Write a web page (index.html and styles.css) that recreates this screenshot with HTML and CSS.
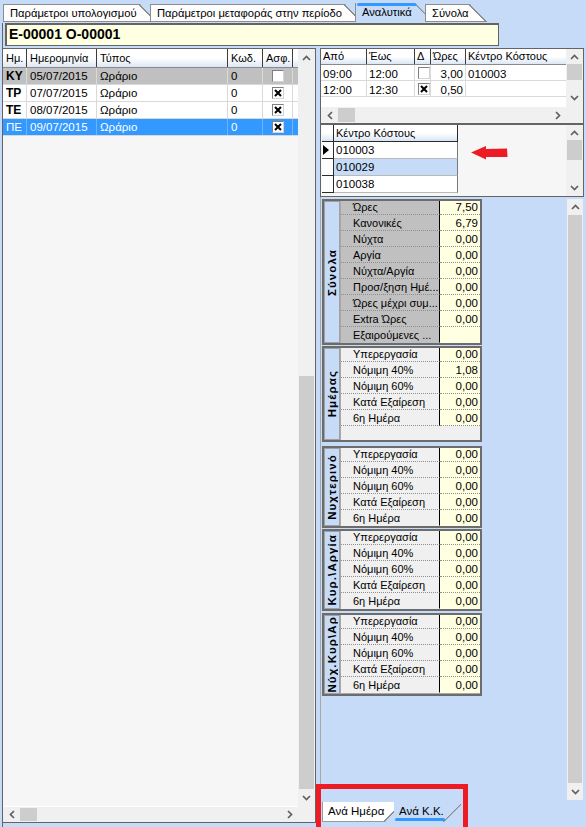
FILE: index.html
```html
<!DOCTYPE html>
<html lang="el">
<head>
<meta charset="utf-8">
<title>Αναλυτικά</title>
<link rel="stylesheet" href="styles.css">
</head>
<body>
<div class="tabs">
  <div class="tab t1">Παράμετροι υπολογισμού</div>
  <div class="tab t2">Παράμετροι μεταφοράς στην περίοδο</div>
  <div class="tab t3 active">Αναλυτικά</div>
  <div class="tab t4">Σύνολα</div>
</div>
<div class="page">
  <div class="title">E-00001 O-00001</div>
  <div class="content">
    <div class="lpane">
      <div class="lbody">
        <div class="lrow lhead">
          <div class="c w1">Ημ.</div><div class="c w2">Ημερομηνία</div><div class="c w3">Τύπος</div><div class="c w4">Κωδ.</div><div class="c w5">Ασφ.</div><div class="c w6"></div>
        </div>
        <div class="lrow gray">
          <div class="c w1 b">ΚΥ</div><div class="c w2">05/07/2015</div><div class="c w3">Ωράριο</div><div class="c w4">0</div><div class="c w5 cbc"><span class="chk"></span></div><div class="c w6"></div>
        </div>
        <div class="lrow">
          <div class="c w1 b">ΤΡ</div><div class="c w2">07/07/2015</div><div class="c w3">Ωράριο</div><div class="c w4">0</div><div class="c w5 cbc"><span class="chk"><svg width="8" height="8" viewBox="0 0 8 8"><path d="M1 1L7 7M7 1L1 7" stroke="#000" stroke-width="2"/></svg></span></div><div class="c w6"></div>
        </div>
        <div class="lrow">
          <div class="c w1 b">ΤΕ</div><div class="c w2">08/07/2015</div><div class="c w3">Ωράριο</div><div class="c w4">0</div><div class="c w5 cbc"><span class="chk"><svg width="8" height="8" viewBox="0 0 8 8"><path d="M1 1L7 7M7 1L1 7" stroke="#000" stroke-width="2"/></svg></span></div><div class="c w6"></div>
        </div>
        <div class="lrow sel">
          <div class="c w1">ΠΕ</div><div class="c w2">09/07/2015</div><div class="c w3">Ωράριο</div><div class="c w4">0</div><div class="c w5 cbc"><span class="chk"><svg width="8" height="8" viewBox="0 0 8 8"><path d="M1 1L7 7M7 1L1 7" stroke="#000" stroke-width="2"/></svg></span></div><div class="c w6"></div>
        </div>
      </div>
      <div class="vsb lv">
        <div class="btn vb"><svg width="9" height="6" viewBox="0 0 9 6"><path d="M1 5L4.5 1.5L8 5" fill="none" stroke="#5f5f5f" stroke-width="1.7"/></svg></div>
        <div class="pre"></div>
        <div class="thumb"></div>
        <div class="btn vb"><svg width="9" height="6" viewBox="0 0 9 6"><path d="M1 1L4.5 4.5L8 1" fill="none" stroke="#5f5f5f" stroke-width="1.7"/></svg></div>
      </div>
      <div class="hsb">
        <div class="btn hb"><svg width="6" height="9" viewBox="0 0 6 9"><path d="M5 1L1.5 4.5L5 8" fill="none" stroke="#5f5f5f" stroke-width="1.7"/></svg></div>
        <div class="hthumb"></div>
        <div class="htrack"></div>
        <div class="btn hb"><svg width="6" height="9" viewBox="0 0 6 9"><path d="M1 1L4.5 4.5L1 8" fill="none" stroke="#5f5f5f" stroke-width="1.7"/></svg></div>
      </div>
      <div class="corner"></div>
    </div>

    <div class="rpane">
      <div class="tgrid">
        <div class="tbody">
          <div class="trow thead">
            <div class="tc a1">Από</div><div class="tc a2">Έως</div><div class="tc a3">Δ</div><div class="tc a4">Ώρες</div><div class="tc a5">Κέντρο Κόστους</div>
          </div>
          <div class="trow">
            <div class="tc a1">09:00</div><div class="tc a2">12:00</div><div class="tc a3 cbc"><span class="chk"></span></div><div class="tc a4 num">3,00</div><div class="tc a5">010003</div>
          </div>
          <div class="trow">
            <div class="tc a1">12:00</div><div class="tc a2">12:30</div><div class="tc a3 cbc"><span class="chk"><svg width="8" height="8" viewBox="0 0 8 8"><path d="M1 1L7 7M7 1L1 7" stroke="#000" stroke-width="2"/></svg></span></div><div class="tc a4 num">0,50</div><div class="tc a5"></div>
          </div>
        </div>
        <div class="vsb tv">
          <div class="btn tvu"><svg width="9" height="6" viewBox="0 0 9 6"><path d="M1 5L4.5 1.5L8 5" fill="none" stroke="#5f5f5f" stroke-width="1.7"/></svg></div>
          <div class="thumb tthumb"></div>
          <div class="pre"></div>
          <div class="btn tvd"><svg width="9" height="6" viewBox="0 0 9 6"><path d="M1 1L4.5 4.5L8 1" fill="none" stroke="#5f5f5f" stroke-width="1.7"/></svg></div>
        </div>
        <div class="hsb">
          <div class="btn hb"><svg width="6" height="9" viewBox="0 0 6 9"><path d="M5 1L1.5 4.5L5 8" fill="none" stroke="#5f5f5f" stroke-width="1.7"/></svg></div>
          <div class="hthumb"></div>
          <div class="htrack"></div>
          <div class="btn hb"><svg width="6" height="9" viewBox="0 0 6 9"><path d="M1 1L4.5 4.5L1 8" fill="none" stroke="#5f5f5f" stroke-width="1.7"/></svg></div>
        </div>
        <div class="corner"></div>
      </div>

      <div class="cgrid">
        <div class="cbody">
          <div class="crow chead"><div class="ind"></div><div class="cc">Κέντρο Κόστους</div></div>
          <div class="crow"><div class="ind"><svg width="6" height="10" viewBox="0 0 6 10"><path d="M0 0L6 5L0 10Z" fill="#000"/></svg></div><div class="cc">010003</div></div>
          <div class="crow"><div class="ind"></div><div class="cc hl">010029</div></div>
          <div class="crow"><div class="ind"></div><div class="cc">010038</div></div>
        </div>
        <div class="vsb cv">
          <div class="btn cvu"><svg width="9" height="6" viewBox="0 0 9 6"><path d="M1 5L4.5 1.5L8 5" fill="none" stroke="#5f5f5f" stroke-width="1.7"/></svg></div>
          <div class="thumb cthumb"></div>
          <div class="pre"></div>
          <div class="btn cvd"><svg width="9" height="6" viewBox="0 0 9 6"><path d="M1 1L4.5 4.5L8 1" fill="none" stroke="#5f5f5f" stroke-width="1.7"/></svg></div>
        </div>
      </div>

      <div class="spanel">
        <div class="groups">
          <div class="grp g1 tot">
            <div class="cap"><span>Σύνολα</span></div>
            <div class="rows"><div class="rin">
              <div class="r"><div class="l">Ώρες</div><div class="v">7,50</div></div>
              <div class="r"><div class="l">Κανονικές</div><div class="v">6,79</div></div>
              <div class="r"><div class="l">Νύχτα</div><div class="v">0,00</div></div>
              <div class="r"><div class="l">Αργία</div><div class="v">0,00</div></div>
              <div class="r"><div class="l">Νύχτα/Αργία</div><div class="v">0,00</div></div>
              <div class="r"><div class="l">Προσ/ξηση Ημέ...</div><div class="v">0,00</div></div>
              <div class="r"><div class="l">Ώρες μέχρι συμ...</div><div class="v">0,00</div></div>
              <div class="r"><div class="l">Extra Ώρες</div><div class="v">0,00</div></div>
              <div class="r last"><div class="l">Εξαιρούμενες ...</div><div class="v"></div></div>
            </div></div>
          </div>
          <div class="grp g2">
            <div class="cap"><span>Ημέρας</span></div>
            <div class="rows tall"><div class="rin">
              <div class="r"><div class="l">Υπερεργασία</div><div class="v">0,00</div></div>
              <div class="r"><div class="l">Νόμιμη 40%</div><div class="v">1,08</div></div>
              <div class="r"><div class="l">Νόμιμη 60%</div><div class="v">0,00</div></div>
              <div class="r"><div class="l">Κατά Εξαίρεση</div><div class="v">0,00</div></div>
              <div class="r"><div class="l">6η Ημέρα</div><div class="v">0,00</div></div>
            </div></div>
          </div>
          <div class="grp g3">
            <div class="cap"><span>Νυχτερινό</span></div>
            <div class="rows"><div class="rin">
              <div class="r"><div class="l">Υπερεργασία</div><div class="v">0,00</div></div>
              <div class="r"><div class="l">Νόμιμη 40%</div><div class="v">0,00</div></div>
              <div class="r"><div class="l">Νόμιμη 60%</div><div class="v">0,00</div></div>
              <div class="r"><div class="l">Κατά Εξαίρεση</div><div class="v">0,00</div></div>
              <div class="r last"><div class="l">6η Ημέρα</div><div class="v">0,00</div></div>
            </div></div>
          </div>
          <div class="grp g4">
            <div class="cap"><span>Κυρ.\Αργία</span></div>
            <div class="rows"><div class="rin">
              <div class="r"><div class="l">Υπερεργασία</div><div class="v">0,00</div></div>
              <div class="r"><div class="l">Νόμιμη 40%</div><div class="v">0,00</div></div>
              <div class="r"><div class="l">Νόμιμη 60%</div><div class="v">0,00</div></div>
              <div class="r"><div class="l">Κατά Εξαίρεση</div><div class="v">0,00</div></div>
              <div class="r last"><div class="l">6η Ημέρα</div><div class="v">0,00</div></div>
            </div></div>
          </div>
          <div class="grp g5">
            <div class="cap"><span>Νύχ.Κυρ\Αρ</span></div>
            <div class="rows"><div class="rin">
              <div class="r"><div class="l">Υπερεργασία</div><div class="v">0,00</div></div>
              <div class="r"><div class="l">Νόμιμη 40%</div><div class="v">0,00</div></div>
              <div class="r"><div class="l">Νόμιμη 60%</div><div class="v">0,00</div></div>
              <div class="r"><div class="l">Κατά Εξαίρεση</div><div class="v">0,00</div></div>
              <div class="r last"><div class="l">6η Ημέρα</div><div class="v">0,00</div></div>
            </div></div>
          </div>
        </div>
        <div class="vsb sv">
          <div class="btn svu"><svg width="9" height="6" viewBox="0 0 9 6"><path d="M1 5L4.5 1.5L8 5" fill="none" stroke="#5f5f5f" stroke-width="1.7"/></svg></div>
          <div class="thumb"></div>
          <div class="btn svd"><svg width="9" height="6" viewBox="0 0 9 6"><path d="M1 1L4.5 4.5L8 1" fill="none" stroke="#5f5f5f" stroke-width="1.7"/></svg></div>
        </div>
      </div>

      <div class="btabs">
        <div class="btab bt1">Ανά Ημέρα</div>
        <div class="btab bt2">Ανά Κ.Κ.</div>
      </div>
    </div>
  </div>
</div>

<div class="annot-box"></div>
<svg class="annot-arrow" width="37" height="14" viewBox="0 0 37 14"><path d="M0 6.5L15 0L15 3L36 2.5L36.5 11L15 11L15 13.5Z" fill="#ed1c24"/></svg>
</body>
</html>
```

FILE: styles.css
```css
* { box-sizing: border-box; margin: 0; padding: 0; }
html, body { width: 586px; height: 827px; overflow: hidden; }
body {
  background: #c5dbf8;
  font-family: "Liberation Sans", Arial, sans-serif;
  font-size: 11.5px;
  color: #000;
  position: relative;
}

/* top tabs */
.tabs { display: flex; height: 22px; padding: 4px 0 0 3px; }
.tab {
  height: 18px;
  padding-left: 6px;
  line-height: 16px;
  font-size: 11.2px;
  white-space: nowrap;
  border-left: 1px solid #8c8c8c;
  border-top: 1px solid #8c8c8c;
  border-bottom: 1px solid #8c8c8c;
  background: linear-gradient(225deg, transparent 7px, #8c8c8c 7px, #8c8c8c 8.2px, #fdfdfd 8.2px);
  clip-path: polygon(0 0, calc(100% - 10px) 0, 100% 10px, 100% 100%, 0 100%);
}
.t1 { width: 147px; }
.t2 { width: 205px; }
.t3 { width: 70px; }
.t4 {
  width: 62px;
  background: linear-gradient(225deg, transparent 12px, #8c8c8c 12px, #8c8c8c 13.2px, #fdfdfd 13.2px);
  clip-path: polygon(0 0, calc(100% - 17px) 0, 100% 17px, 100% 100%, 0 100%);
}
.tab.active {
  position: relative;
  margin-top: -1px;
  height: 19px;
  padding-top: 1px;
  border-top: none;
  border-bottom: none;
  background: linear-gradient(225deg, transparent 7px, #8c8c8c 7px, #8c8c8c 8.2px, #c5dbf8 8.2px);
}
.tab.active::before {
  content: "";
  position: absolute;
  left: 1px;
  top: 0;
  width: 60px;
  height: 3px;
  border-radius: 2px;
  background: #3399ff;
}

/* page */
.page {
  margin-left: 2px;
  border-left: 1px solid #646464;
  height: 805px;
}
.title {
  margin: 1px 0 0 2px;
  width: 494px;
  height: 23px;
  background: #ffffe1;
  border: 1px solid #646464;
  border-width: 2px 1px 1px 2px;
  padding-left: 2px;
  font-weight: bold;
  font-size: 14px;
  line-height: 19px;
}
.content {
  margin-top: 2px;
  display: flex;
  gap: 4px;
  height: 775px;
}

/* left pane */
.lpane {
  width: 313px;
  height: 775px;
  border: 1px solid #646464;
  border-left: none;
  background: #f6f6f6;
  display: grid;
  grid-template-columns: 295px 17px;
  grid-template-rows: 757px 16px;
}
.lrow { display: flex; height: 17px; border-bottom: 1px solid #d9d9d9; background: #fff; }
.lrow.lhead { height: 19px; border-bottom: 1px solid #8a8a8a; }
.c {
  padding-left: 3px;
  white-space: nowrap;
  overflow: hidden;
  border-right: 1px solid #d9d9d9;
  line-height: 16px;
}
.lhead .c {
  border-right: 1px solid #3c3c3c;
  background: linear-gradient(#ffffff, #ffffff 50%, #dde7f4);
  line-height: 18px;
  font-size: 11px;
}
.w1 { width: 24px; }
.w2 { width: 70px; }
.w3 { width: 131px; }
.w4 { width: 35px; }
.w5 { width: 30px; }
.w6 { width: 5px; border-right: none !important; }
.b { font-weight: bold; font-size: 12px; }
.lrow.gray { background: #c0c0c0; }
.lrow.sel { background: #3399ff; color: #fff; }
.lrow.sel .c { border-right-color: #6bb5ff; }
.cbc { display: flex; align-items: center; justify-content: center; padding-left: 0; }
.chk {
  width: 12px;
  height: 12px;
  background: #fff;
  border: 1px solid;
  border-color: #808080 #d4d4d4 #d4d4d4 #808080;
  display: flex;
  align-items: center;
  justify-content: center;
}

/* scrollbars */
.vsb { display: flex; flex-direction: column; background: #f0f0f0; }
.btn { display: flex; align-items: center; justify-content: center; background: #f0f0f0; }
.vb { height: 17px; }
.thumb { background: #cdcdcd; margin: 0 1px; }
.lv .pre { height: 310px; }
.lv .thumb { flex: 1; }
.hsb { display: flex; background: #f0f0f0; border-top: 1px solid #fff; }
.hb { width: 17px; }
.hthumb { width: 17px; background: #cdcdcd; margin: 1px 0; }
.htrack { flex: 1; }
.corner { background: #f0f0f0; }

/* right pane */
.rpane {
  width: 264px;
  height: 775px;
  display: flex;
  flex-direction: column;
}
.tgrid {
  height: 76px;
  border: 1px solid #646464;
  background: #fff;
  display: grid;
  grid-template-columns: 245px 17px;
  grid-template-rows: 57px 17px;
}
.trow { display: flex; height: 16px; border-bottom: 1px solid #d9d9d9; }
.trow.thead { height: 16px; border-bottom: 1px solid #8a8a8a; }
.tc {
  padding-left: 2px;
  white-space: nowrap;
  overflow: hidden;
  border-right: 1px solid #d9d9d9;
  line-height: 16px;
  padding-top: 1px;
}
.thead .tc {
  border-right: 1px solid #3c3c3c;
  background: linear-gradient(#ffffff, #ffffff 50%, #dde7f4);
  line-height: 15px;
  padding-top: 0;
  font-size: 11px;
}
.a1 { width: 46px; }
.a2 { width: 48px; }
.a3 { width: 16px; }
.a4 { width: 35px; }
.a5 { width: 100px; border-right: none !important; }
.tc.num { text-align: right; padding-right: 2px; }
.tc.cbc { padding-top: 0; }
.tvu { height: 15px; }
.tthumb { height: 16px; }
.tv .pre { flex: 1; }
.tvd { height: 16px; }

.cgrid {
  height: 73px;
  border: 1px solid #646464;
  background: #f6f6f6;
  display: grid;
  grid-template-columns: 245px 17px;
}
.cbody { padding: 0 0 0 1px; }
.crow { display: flex; height: 17px; }
.ind {
  width: 12px;
  background: #fdfdfd;
  border-right: 1px solid #2a2a2a;
  border-bottom: 1px solid #2a2a2a;
  display: flex;
  align-items: center;
  justify-content: flex-start;
  padding-left: 1px;
}
.cc {
  width: 124px;
  background: #fff;
  border-right: 1px solid #7a7a7a;
  border-bottom: 1px solid #b9b9b9;
  padding-left: 2px;
  line-height: 16px;
}
.cc.hl { background: #c5dbf8; }
.chead .ind, .chead .cc {
  background: linear-gradient(#ffffff, #ffffff 50%, #d8e5f5);
  border-bottom: 1px solid #2a2a2a;
  border-right: 1px solid #2a2a2a;
}
.chead .cc { font-size: 11px; }
.cvu { height: 15px; }
.cthumb { height: 20px; }
.cv .pre { flex: 1; }
.cvd { height: 16px; }

/* scroll panel with groups */
.spanel {
  height: 605px;
  display: flex;
  justify-content: space-between;
  border-left: 1px solid #a8a8a8;
  padding: 2px 1px 2px 1px;
  background: #c5dbf8;
}
.groups { width: 160px; display: flex; flex-direction: column; }
.grp {
  display: flex;
  border: 2px solid #6c6c6c;
  background: #a9a9a9;
}
.g1 { margin-bottom: 1px; }
.g2 { margin-bottom: 4px; }
.g3 { margin-bottom: 1px; }
.g4 { margin-bottom: 2px; }
.cap {
  width: 16px;
  margin-right: 1px;
  background: #c5dbf8;
  border: 1px solid #a0a0a0;
  display: flex;
  align-items: center;
  justify-content: center;
}
.cap span {
  writing-mode: vertical-rl;
  transform: rotate(180deg);
  font-weight: bold;
  font-size: 11.5px;
  letter-spacing: 1.1px;
  white-space: nowrap;
}
.rows { flex: 1; overflow: hidden; background: #f0f0f0; height: 78px; }
.tot .rows { height: 142px; }
.rows.tall { height: 92px; }
.rin { margin-top: -2px; }
.r { display: flex; height: 16px; font-size: 11px; }
.l {
  width: 99px;
  padding-left: 12px;
  background: #f0f0f0;
  border-right: 1px solid #000;
  border-bottom: 1px dotted #8f8f8f;
  white-space: nowrap;
  overflow: hidden;
  line-height: 16px;
}
.v {
  flex: 1;
  background: #ffffe1;
  border-bottom: 1px dotted #8f8f8f;
  text-align: right;
  padding-right: 2px;
  line-height: 16px;
  font-size: 11.5px;
}
.tot .l { background: #c0c0c0; }
.r.last .l, .r.last .v { border-bottom-color: transparent; }

.sv { width: 16px; }
.svu { height: 16px; }
.sv .thumb { flex: 1; }
.svd { height: 17px; }

/* bottom tabs */
.btabs { height: 21px; display: flex; padding-left: 2px; }
.btab {
  height: 20px;
  font-size: 11.5px;
  line-height: 18px;
  padding-left: 5px;
  white-space: nowrap;
}
.bt1 {
  width: 72px;
  border-left: 1px solid #9a9a9a;
  border-bottom: 1px solid #9a9a9a;
  background: linear-gradient(315deg, transparent 6px, #8c8c8c 6px, #8c8c8c 7.2px, #ffffff 7.2px);
  clip-path: polygon(0 0, 100% 0, 100% calc(100% - 9px), calc(100% - 9px) 100%, 0 100%);
}
.bt2 {
  position: relative;
  width: 67px;
  background: linear-gradient(315deg, transparent 12px, #8c8c8c 12px, #8c8c8c 13.2px, #c5dbf8 13.2px);
  clip-path: polygon(0 0, 100% 0, 100% calc(100% - 17px), calc(100% - 17px) 100%, 0 100%);
}
.bt2::after {
  content: "";
  position: absolute;
  left: 1px;
  bottom: 1px;
  width: 50px;
  height: 3px;
  border-radius: 2px;
  background: #3399ff;
}

/* annotations */
.annot-box {
  position: absolute;
  left: 316px;
  top: 784px;
  width: 152px;
  height: 48px;
  border: 5px solid #ed1c24;
}
.annot-arrow {
  position: absolute;
  left: 471px;
  top: 146px;
}
```
